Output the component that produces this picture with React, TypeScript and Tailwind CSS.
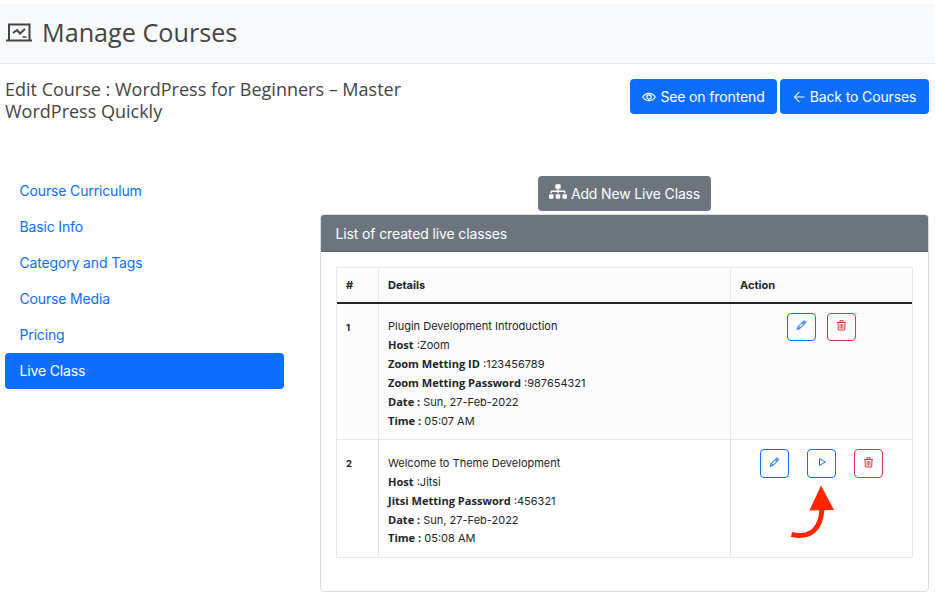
import React from "react";
import { TfiArrowLeft, TfiPencil } from "react-icons/tfi";
import { FaSitemap } from "react-icons/fa";

const tabs = ["Course Curriculum", "Basic Info", "Category and Tags", "Course Media", "Pricing", "Live Class"];

type Line = { label?: string; value: string };

const zoomClass: Line[] = [
  { value: "Plugin Development Introduction" },
  { label: "Host", value: " :Zoom" },
  { label: "Zoom Metting ID", value: " :123456789" },
  { label: "Zoom Metting Password", value: " :987654321" },
  { label: "Date :", value: " Sun, 27-Feb-2022" },
  { label: "Time :", value: " 05:07 AM" },
];

const jitsiClass: Line[] = [
  { value: "Welcome to Theme Development" },
  { label: "Host", value: " :Jitsi" },
  { label: "Jitsi Metting Password", value: " :456321" },
  { label: "Date :", value: " Sun, 27-Feb-2022" },
  { label: "Time :", value: " 05:08 AM" },
];

function CourseIcon() {
  return (
    <svg className="h-[19px] w-[27px]" viewBox="0 0 27 19" fill="none" stroke="currentColor">
      <path d="M3 17V1.500H23.500V17" strokeWidth="2" />
      <path d="M0 17.500H26" strokeWidth="2" />
      <path d="M7 10L11 7L14 10.500L19 6" strokeWidth="2" />
      <path d="M16.500 14H20.500" strokeWidth="1.500" />
    </svg>
  );
}

function EyeIcon() {
  return (
    <svg className="mr-[4px] h-[10px] w-[14px]" viewBox="0 0 14 10" fill="none" stroke="currentColor">
      <path d="M.7 5C3.800 .2 10.200 .2 13.300 5C10.200 9.800 3.800 9.800 .7 5Z" strokeWidth="1.100" />
      <circle cx="7" cy="5" r="2.200" strokeWidth="1.200" />
    </svg>
  );
}

function TrashIcon() {
  return (
    <svg className="h-[11px] w-[11px]" viewBox="0 0 11 11" fill="none" stroke="currentColor">
      <path d="M1 2.500H10M4 2.300V.700H7V2.300M2 2.500L2.300 10H8.700L9 2.500" strokeWidth="1" />
      <path d="M4.100 4V8.700M5.500 4V8.700M6.900 4V8.700" strokeWidth=".8" />
    </svg>
  );
}

function PlayIcon() {
  return (
    <svg className="h-[10px] w-[10px]" viewBox="0 0 10 10" fill="none" stroke="currentColor">
      <path d="M2.500 1.500V8.500L8.300 5Z" strokeWidth="1" />
    </svg>
  );
}

function Details({ lines, loose }: { lines: Line[]; loose?: boolean }) {
  return (
    <div className={`pl-[9px] text-[11px] ${loose ? "leading-[19px]" : "leading-[18.85px]"}`}>
      {lines.map((l) => (
        <div key={l.value} className="whitespace-pre">
          {l.label && <b className="font-['Open_Sans',sans-serif] text-[11.05px] leading-none font-bold">{l.label}</b>}
          {l.value}
        </div>
      ))}
    </div>
  );
}

function ActionButton({ danger, short, children }: { danger?: boolean; short?: boolean; children: React.ReactNode }) {
  return (
    <button
      className={`flex w-[29px] items-center justify-center rounded-[4px] border pb-[3px] text-[10.5px] ${short ? "h-[28px]" : "h-[29px]"} ${
        danger ? "border-[#dc3545] text-[#dc3545]" : "border-[#0d6efd] text-[#0d6efd]"
      }`}
    >
      {children}
    </button>
  );
}

export default function App() {
  return (
    <div className="h-[598px] w-[935px] overflow-hidden bg-white pt-1 font-[Inter,sans-serif] text-[#212529]">
      <header className="flex h-[60px] items-center border-b border-[#e5e8eb] bg-[#f8f9fa] pb-[3px] pl-[6px] text-[#444]">
        <CourseIcon />
        <h1 className="ml-[9px] font-['Open_Sans',sans-serif] text-[25.2px] leading-[32px]">Manage Courses</h1>
      </header>

      <div className="flex h-[112px] justify-between pt-[15px] pr-[6px] pl-[5px]">
        <h2 className="mt-[-1px] w-[420px] font-['Open_Sans',sans-serif] text-[18px] leading-[22px] text-[#444]">
          Edit Course : WordPress for Beginners – Master
          <br />
          WordPress Quickly
        </h2>
        <div className="flex gap-[3px] text-[14px] tracking-[-0.13px] text-white">
          <a className="flex h-[35px] w-[147px] items-center justify-center rounded-[4px] bg-[#0d6efd]">
            <EyeIcon />
            See on frontend
          </a>
          <a className="flex h-[35px] w-[149px] items-center justify-center rounded-[4px] bg-[#0d6efd]">
            <TfiArrowLeft className="mr-[5px] h-[12px] w-[12px]" stroke="currentColor" strokeWidth=".5" />
            Back to Courses
          </a>
        </div>
      </div>

      <div className="flex pl-[5px]">
        <nav className="mt-[-3px] w-[279px] text-[14px] tracking-[-0.15px]">
          {tabs.map((t) => (
            <a
              key={t}
              className={`flex h-9 items-center rounded-[4px] pb-[2px] pl-[14.5px] ${t === "Live Class" ? "bg-[#0d6efd] text-white" : "text-[#0d6efd]"}`}
            >
              {t}
            </a>
          ))}
        </nav>

        <main className="ml-[36px] w-[609px]">
          <button className="mx-auto flex h-[35px] w-[173px] items-center justify-center rounded-[4px] bg-[#6c757d] text-[14px] tracking-[-0.15px] text-white">
            <FaSitemap className="mt-[-4px] mr-[4px] h-[15px] w-[18px]" />
            Add New Live Class
          </button>

          <section className="mt-[3px] h-[378px] overflow-hidden rounded-[4px] border border-[#dcdcdd]">
            <div className="flex h-[37px] items-center border-b border-[#5b646c] bg-[#6c757d] pl-[14.5px] text-[14px] tracking-[-0.13px] text-white">
              List of created live classes
            </div>
            <div className="mt-[15px] ml-[15px] w-[577px] border border-[#e6e7e8]">
              <div className="grid h-[36px] grid-cols-[42px_352px_181px] items-stretch border-b-2 border-[#212529] bg-[#fcfcfc] text-[11px] font-bold">
                <div className="flex items-center border-r border-[#e6e7e8] pl-[9px]">#</div>
                <div className="flex items-center border-r border-[#e6e7e8] pl-[9px]">Details</div>
                <div className="flex items-center pl-[9px]">Action</div>
              </div>
              <div className="grid h-[136px] grid-cols-[42px_352px_181px] border-b border-[#e6e7e8] bg-[#fcfcfc]">
                <div className="border-r border-[#e6e7e8] pt-[14px] pl-[9px] text-[9.5px] leading-[19px] font-bold">1</div>
                <div className="border-r border-[#e6e7e8] pt-[13px]">
                  <Details lines={zoomClass} loose />
                </div>
                <div className="flex gap-[11px] pt-[9px] pl-[56px]">
                  <ActionButton short><TfiPencil stroke="currentColor" strokeWidth=".5" /></ActionButton>
                  <ActionButton short danger><TrashIcon /></ActionButton>
                </div>
              </div>
              <div className="grid h-[117px] grid-cols-[42px_352px_181px]">
                <div className="border-r border-[#e6e7e8] pt-[14px] pl-[9px] text-[9.5px] leading-[19px] font-bold">2</div>
                <div className="border-r border-[#e6e7e8] pt-[14px]">
                  <Details lines={jitsiClass} />
                </div>
                <div className="relative flex gap-[18px] pt-[9px] pl-[29px]">
                  <ActionButton><TfiPencil stroke="currentColor" strokeWidth=".5" /></ActionButton>
                  <ActionButton><PlayIcon /></ActionButton>
                  <ActionButton danger><TrashIcon /></ActionButton>
                  <svg className="absolute top-[45px] left-[59px]" width="46" height="56" viewBox="0 0 46 56">
                    <path d="M1.5 49.5C21 53.500 31.500 44 32 22" fill="none" stroke="#ff2600" strokeWidth="5" />
                    <path d="M31 .5L44 25L19.500 25.500Z" fill="#ff2600" />
                  </svg>
                </div>
              </div>
            </div>
          </section>
        </main>
      </div>
    </div>
  );
}
